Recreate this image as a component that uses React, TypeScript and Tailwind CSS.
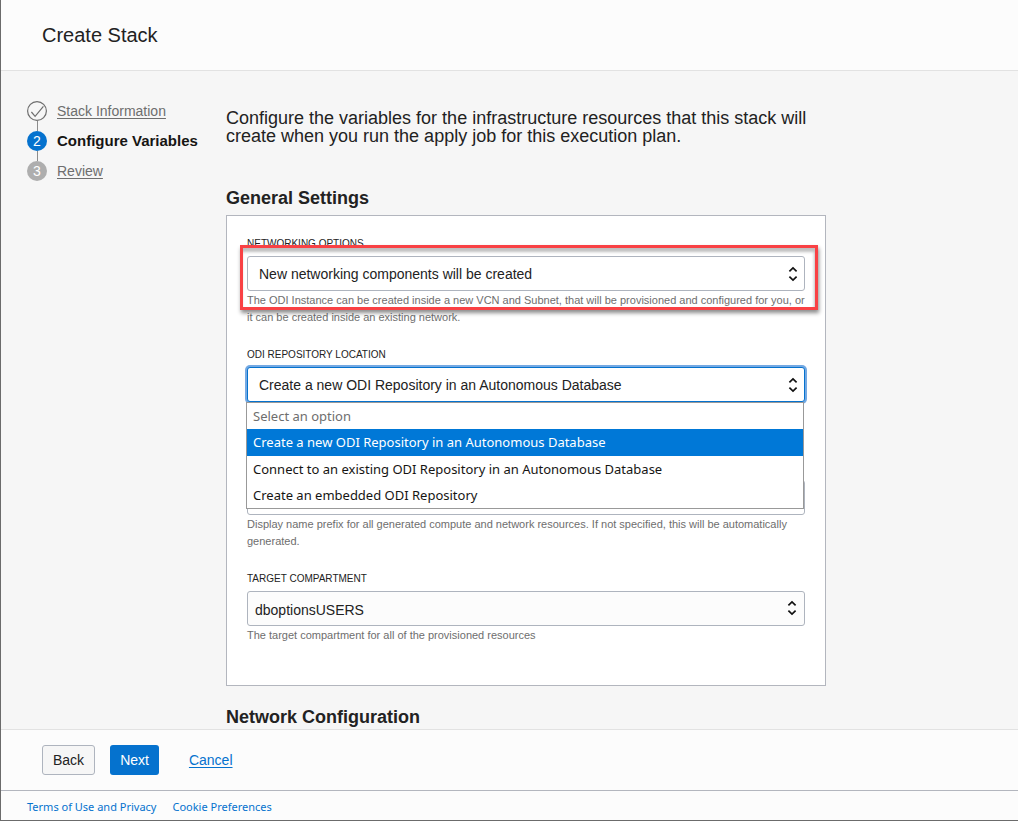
import React from "react";

type FieldProps = {
  id: string;
  label: string;
  help?: string;
  className?: string;
  children: React.ReactNode;
};

const repositoryOptions = [
  "Select an option",
  "Create a new ODI Repository in an Autonomous Database",
  "Connect to an existing ODI Repository in an Autonomous Database",
  "Create an embedded ODI Repository",
];

function Chevrons() {
  return (
    <svg
      viewBox="0 0 10 16"
      className="pointer-events-none h-4 w-[10px]"
      fill="none"
      stroke="#111"
      strokeWidth="1.7"
      aria-hidden="true"
    >
      <path d="M1.4 5.4 5 2 8.6 5.4M1.4 10.6 5 14l3.6-3.4" />
    </svg>
  );
}

function Field({ id, label, help, className = "", children }: FieldProps) {
  return (
    <div className={`relative ${className}`}>
      <label htmlFor={id} className="block text-[10px] leading-4 text-[#222]">
        {label}
      </label>
      <div className="relative mt-1">{children}</div>
      {help && <p className="mt-px text-[11px] leading-[17px] text-[#6e6e6e]">{help}</p>}
    </div>
  );
}

function Step({ marker, label, current, last }: { marker: React.ReactNode; label: string; current?: boolean; last?: boolean }) {
  return (
    <li className="flex gap-[10px]">
      <div className="flex flex-col items-center">
        {marker}
        {!last && <span className="h-[10px] w-px bg-[#8c8c8c]" />}
      </div>
      <a
        href="#step"
        aria-current={current ? "step" : undefined}
        className={
          current
            ? "text-[15px] leading-5 font-bold text-[#161513]"
            : "text-[14px] leading-5 text-[#6e6e6e] underline underline-offset-2"
        }
      >
        {label}
      </a>
    </li>
  );
}

export default function App() {
  return (
    <div className="flex h-screen flex-col border-b border-l border-[#6b6b6b] bg-[#f6f6f6] font-['Liberation_Sans',Arial,sans-serif] text-[#222]">
      <header className="flex h-[71px] shrink-0 items-center border-b border-[#e2e2e2] bg-[#fcfcfc] pl-[41px]">
        <h1 className="text-[20px] leading-6">Create Stack</h1>
      </header>

      <main className="flex min-h-0 flex-1 overflow-y-auto pl-[26px]">
        <nav aria-label="Steps" className="w-[199px] shrink-0 pt-[30px]">
          <ol>
            <Step
              label="Stack Information"
              marker={
                <svg viewBox="0 0 20 20" className="size-5" fill="none" stroke="#6e6e6e" aria-hidden="true">
                  <circle cx="10" cy="10" r="9.4" strokeWidth="1.2" />
                  <path d="m4.4 11 3.7 4.3 8.3-9.9" strokeWidth="1.2" />
                </svg>
              }
            />
            <Step
              current
              label="Configure Variables"
              marker={
                <span className="size-5 rounded-full bg-[#0572ce] text-center text-[14px] leading-5 text-white">2</span>
              }
            />
            <Step
              last
              label="Review"
              marker={
                <span className="size-5 rounded-full bg-[#aeaeae] text-center text-[14px] leading-5 text-white">3</span>
              }
            />
          </ol>
        </nav>

        <div className="w-full max-w-[600px] pt-[38px]">
          <p className="text-[18px] leading-[18px]">
            Configure the variables for the infrastructure resources that this stack will create when you run the apply
            job for this execution plan.
          </p>

          <h2 className="mt-[43px] text-[18px] leading-5 font-bold">General Settings</h2>
          <section className="mt-[7px] flex flex-col gap-[21px] border border-[#b3b6be] bg-white px-5 pt-5 pb-[41px]">
            <Field
              id="networking"
              label="NETWORKING OPTIONS"
              help="The ODI Instance can be created inside a new VCN and Subnet, that will be provisioned and configured for you, or it can be created inside an existing network."
            >
              <select
                id="networking"
                className="block h-[35px] w-full appearance-none rounded-[3px] border border-[#aeb4be] bg-white px-[11px] pt-[2px] text-[14px]"
              >
                <option>New networking components will be created</option>
              </select>
              <span className="pointer-events-none absolute inset-y-0 right-[7px] flex items-center">
                <Chevrons />
              </span>
              <span className="pointer-events-none absolute -top-[11px] -right-[13px] -left-[7px] h-[65px] border-3 border-[#f94144] shadow-[1px_3px_4px_rgba(0,0,0,0.45),inset_-1px_4px_3px_rgba(0,0,0,0.25)]" />
            </Field>

            <Field id="repository" label="ODI REPOSITORY LOCATION" className="z-10 pb-[37px]">
              <select
                id="repository"
                defaultValue={repositoryOptions[1]}
                className="block h-[35px] w-full appearance-none rounded-[3px] border border-[#0572ce] bg-white px-[11px] pt-[2px] text-[14px] ring-2 ring-[#74a9e3]"
              >
                {repositoryOptions.map((option) => (
                  <option key={option}>{option}</option>
                ))}
              </select>
              <span className="pointer-events-none absolute inset-y-0 right-[7px] flex items-center">
                <Chevrons />
              </span>
              <ul
                role="listbox"
                aria-label="ODI repository location options"
                className="absolute top-[35px] right-px -left-px border border-[#999] bg-white font-['Noto_Sans',sans-serif] text-[13px]"
              >
                {repositoryOptions.map((option, index) => (
                  <li
                    key={option}
                    role="option"
                    aria-selected={index === 1}
                    className={
                      index === 0
                        ? "px-[6px] leading-[26px] text-[#6e6e6e]"
                        : index === 1
                          ? "bg-[#0078d7] px-[6px] leading-[27px] text-white"
                          : "px-[6px] leading-[26px] text-[#161513]"
                    }
                  >
                    {option}
                  </li>
                ))}
              </ul>
            </Field>

            <div className="pt-5">
              <input
                type="text"
                aria-label="Display name prefix"
                aria-describedby="prefix-help"
                className="block h-[35px] w-full rounded-[3px] border border-[#aeb4be] bg-white px-[11px] text-[14px]"
              />
              <p id="prefix-help" className="mt-px text-[11px] leading-[17px] text-[#6e6e6e]">
                Display name prefix for all generated compute and network resources. If not specified, this will be
                automatically generated.
              </p>
            </div>

            <Field
              id="compartment"
              label="TARGET COMPARTMENT"
              help="The target compartment for all of the provisioned resources"
            >
              <select
                id="compartment"
                className="block h-[35px] w-full appearance-none rounded-[3px] border border-[#aeb4be] bg-[#fcfcfc] px-[7px] pt-[4px] text-[14px]"
              >
                <option>dboptionsUSERS</option>
              </select>
              <span className="pointer-events-none absolute inset-y-0 right-2 flex items-center pb-[2px]">
                <Chevrons />
              </span>
            </Field>
          </section>

          <h2 className="mt-[21px] text-[18px] leading-5 font-bold">Network Configuration</h2>
        </div>
      </main>

      <div className="flex shrink-0 items-center border-t border-[#e2e2e2] bg-[#fcfcfc] py-[15px] pl-[41px] text-[14px]">
        <button type="button" className="h-[30px] rounded-[3px] border border-[#aeb4be] bg-[#f6f6f6] px-[10px]">
          Back
        </button>
        <button type="button" className="ml-[15px] h-[30px] rounded-[3px] bg-[#0572ce] px-[10px] text-white">
          Next
        </button>
        <a href="#cancel" className="ml-[30px] text-[#0572ce] underline underline-offset-2">
          Cancel
        </a>
      </div>

      <footer className="flex h-[30px] shrink-0 items-center gap-4 border-t border-[#b3b6be] bg-[#fcfcfc] pt-1 pl-[26px] font-['Noto_Sans',sans-serif] text-[11px] text-[#0572ce]">
        <a href="#terms">Terms of Use and Privacy</a>
        <a href="#cookies">Cookie Preferences</a>
      </footer>
    </div>
  );
}
